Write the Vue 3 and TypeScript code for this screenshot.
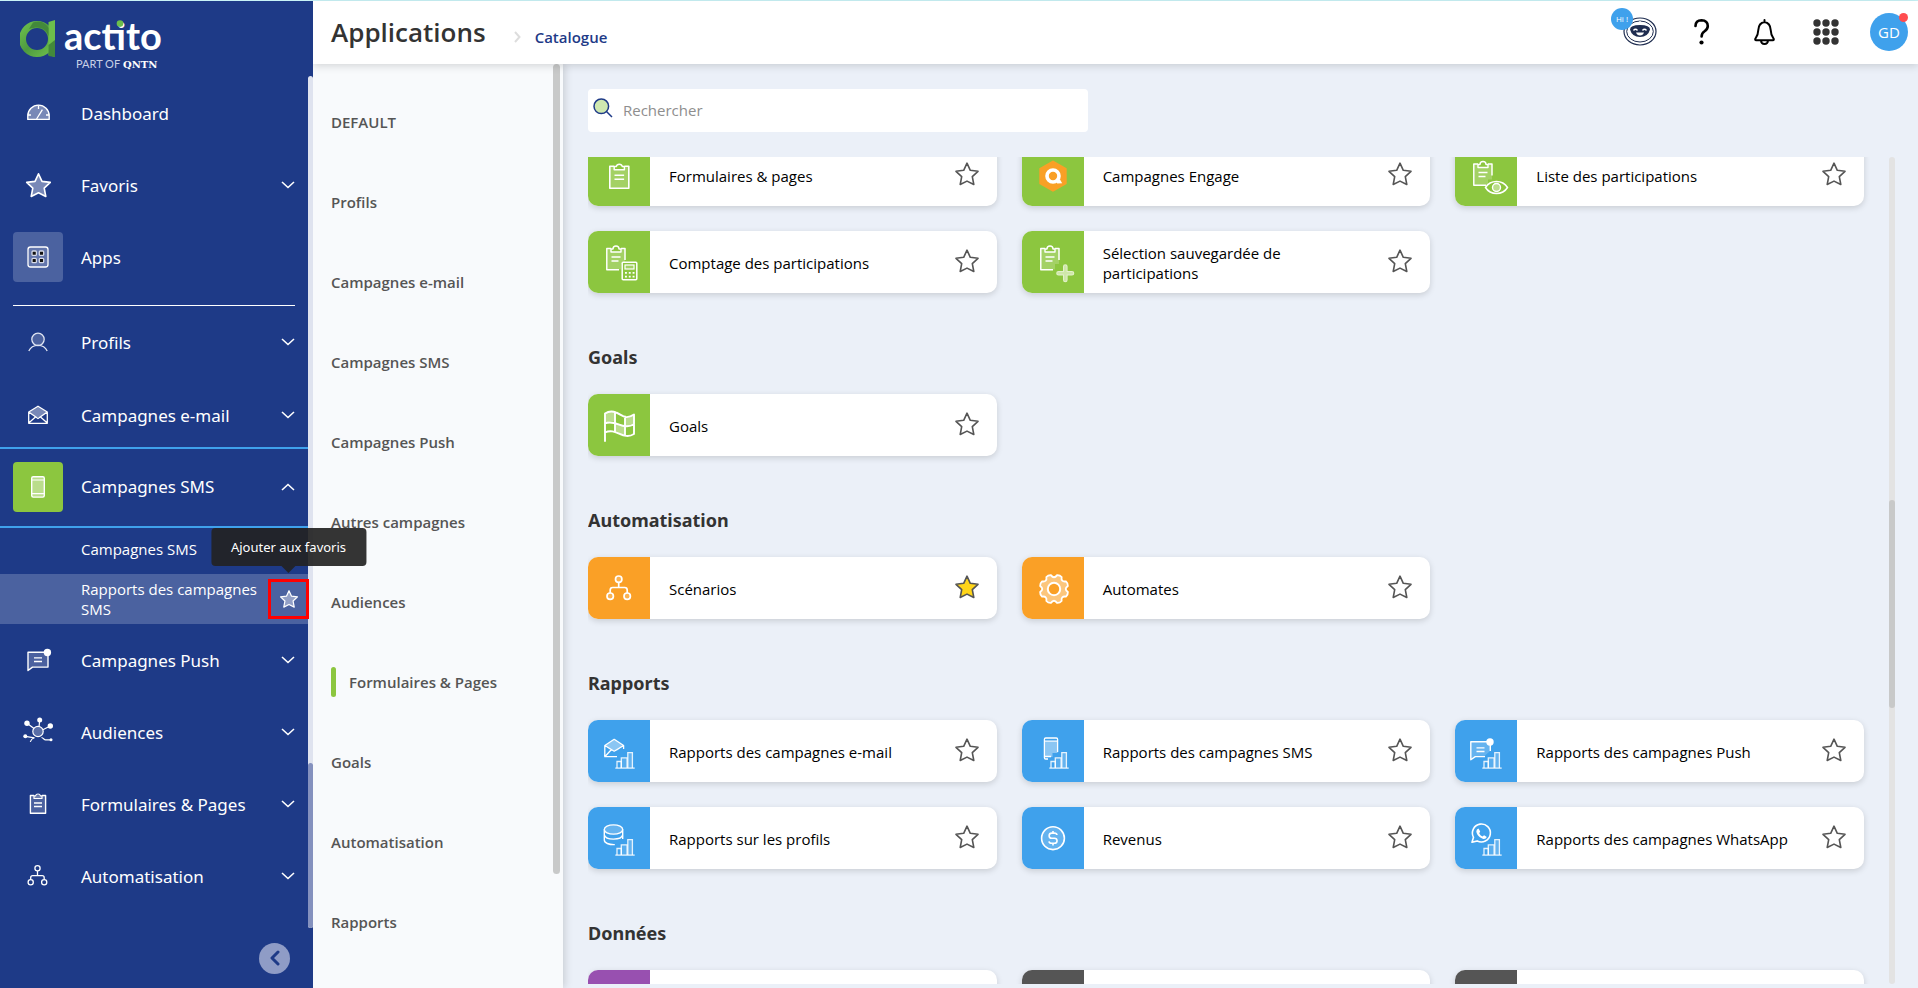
<script setup lang="ts">
import { ref } from 'vue'

interface MenuEntry {
  label: string
  icon: string
  toggle?: boolean
}

interface AppCard {
  name: string
  icon: string
  tone: string
  favourite?: boolean
}

interface AppGroup {
  title: string
  cards: AppCard[]
}

const query = ref('')

const topMenu: MenuEntry[] = [
  { label: 'Dashboard', icon: 'n-dashboard' },
  { label: 'Favoris', icon: 'n-star', toggle: true },
  { label: 'Apps', icon: 'n-apps' },
]

const upperMenu: MenuEntry[] = [
  { label: 'Profils', icon: 'n-profile', toggle: true },
  { label: 'Campagnes e-mail', icon: 'n-mail', toggle: true },
]

const lowerMenu: MenuEntry[] = [
  { label: 'Campagnes Push', icon: 'n-push', toggle: true },
  { label: 'Audiences', icon: 'n-audience', toggle: true },
  { label: 'Formulaires & Pages', icon: 'n-form', toggle: true },
  { label: 'Automatisation', icon: 'n-flow', toggle: true },
]

const categories: string[] = [
  'DEFAULT',
  'Profils',
  'Campagnes e-mail',
  'Campagnes SMS',
  'Campagnes Push',
  'Autres campagnes',
  'Audiences',
  'Formulaires & Pages',
  'Goals',
  'Automatisation',
  'Rapports',
]
const activeCategory = 'Formulaires & Pages'

const groups: AppGroup[] = [
  {
    title: '',
    cards: [
      { name: 'Formulaires & pages', icon: 'c-form', tone: 'green' },
      { name: 'Campagnes Engage', icon: 'c-engage', tone: 'green' },
      { name: 'Liste des participations', icon: 'c-list', tone: 'green' },
      { name: 'Comptage des participations', icon: 'c-count', tone: 'green' },
      { name: 'Sélection sauvegardée de participations', icon: 'c-select', tone: 'green' },
    ],
  },
  { title: 'Goals', cards: [{ name: 'Goals', icon: 'c-flag', tone: 'green' }] },
  {
    title: 'Automatisation',
    cards: [
      { name: 'Scénarios', icon: 'c-flow', tone: 'orange', favourite: true },
      { name: 'Automates', icon: 'c-gear', tone: 'orange' },
    ],
  },
  {
    title: 'Rapports',
    cards: [
      { name: 'Rapports des campagnes e-mail', icon: 'c-mail', tone: 'blue' },
      { name: 'Rapports des campagnes SMS', icon: 'c-sms', tone: 'blue' },
      { name: 'Rapports des campagnes Push', icon: 'c-push', tone: 'blue' },
      { name: 'Rapports sur les profils', icon: 'c-base', tone: 'blue' },
      { name: 'Revenus', icon: 'c-money', tone: 'blue' },
      { name: 'Rapports des campagnes WhatsApp', icon: 'c-whatsapp', tone: 'blue' },
    ],
  },
  {
    title: 'Données',
    cards: [
      { name: '', icon: '', tone: 'purple' },
      { name: '', icon: '', tone: 'grey' },
      { name: '', icon: '', tone: 'grey' },
    ],
  },
]

// Outline of an eight-toothed wheel with rounded notches.
function gearPath(cx: number, cy: number, outer: number, inner: number): string {
  const at = (deg: number, r: number): string => {
    const a = (deg * Math.PI) / 180
    return `${(cx + r * Math.cos(a)).toFixed(2)} ${(cy + r * Math.sin(a)).toFixed(2)}`
  }
  let d = `M${at(12, outer)}`
  for (let k = 0; k < 8; k++) {
    const c = 22.5 + 45 * k
    d += `Q${at(c, outer + 1)} ${at(c + 10, outer)}Q${at(c + 22.5, inner)} ${at(c + 35, outer)}`
  }
  return d + 'Z'
}
const gear = gearPath(32, 32, 14.2, 9.6)

const dots: number[][] = [0, 1, 2].flatMap((r) => [0, 1, 2].map((c) => [10 + c * 9, 10 + r * 9]))
</script>

<template>
  <svg class="defs" aria-hidden="true">
    <defs>
      <linearGradient id="ring" x1="0" y1="0" x2="1" y2="1">
        <stop offset="0" stop-color="#6cbe4b" />
        <stop offset="0.5" stop-color="#4d9a40" />
        <stop offset="1" stop-color="#6cbe4b" />
      </linearGradient>
    </defs>

    <symbol id="star" viewBox="0 0 26 26">
      <path d="M13 2.2l3.3 7.1 7.7 1-5.7 5.3 1.5 7.9L13 20.1l-6.8 3.4 1.5-7.9L2 10.3l7.7-1z" stroke-width="1.6" stroke-linejoin="round" />
    </symbol>

    <symbol id="n-dashboard" viewBox="0 0 50 50">
      <path d="M14.8 31.4v-3.6a10.7 10.7 0 0 1 21.4 0v3.6z" fill="#ffffff66" stroke="#fff" stroke-width="1.4" stroke-linejoin="round" />
      <path d="M23.6 31l5.8-9.4M25.5 17.5v3.4M15 27h3M33 27h3" stroke="#fff" stroke-width="1.3" />
    </symbol>
    <symbol id="n-star" viewBox="0 0 50 50">
      <path d="M25.5 13.8l3.5 7.6 8.3 1-6.1 5.7 1.6 8.4-7.3-3.7-7.3 3.7 1.6-8.4-6.1-5.7 8.3-1z" fill="#ffffff66" stroke="#fff" stroke-width="1.6" stroke-linejoin="round" />
    </symbol>
    <symbol id="n-apps" viewBox="0 0 50 50">
      <rect x="15" y="15" width="20" height="20" rx="2.5" fill="#ffffff22" stroke="#fff" stroke-width="1.3" />
      <g fill="#111" stroke="#d5d9e6" stroke-width="1.3">
        <rect x="19" y="19" width="4.4" height="4.4" rx="1" /><rect x="26.3" y="19" width="4.4" height="4.4" rx="1" />
        <rect x="19" y="26.3" width="4.4" height="4.4" rx="1" /><rect x="26.3" y="26.3" width="4.4" height="4.4" rx="1" />
      </g>
    </symbol>
    <symbol id="n-profile" viewBox="0 0 50 50">
      <circle cx="25" cy="22.3" r="6.2" fill="#ffffff33" stroke="#dfe4f2" stroke-width="1.3" />
      <path d="M15.8 34c1.6-3.6 5-5.7 9.2-5.7s7.600 2.100 9.200 5.700" fill="none" stroke="#dfe4f2" stroke-width="1.3" />
    </symbol>
    <symbol id="n-mail" viewBox="0 0 50 50">
      <path d="M16 22l9-5.800 9 5.800-6 5h-6z" fill="#ffffff66" />
      <path d="M15.700 22L25 16.200 34.300 22v11.300H15.700zM15.700 22l9.300 6.500 9.300-6.500M15.700 33l6.800-6M34.300 33l-6.800-6" fill="none" stroke="#fff" stroke-width="1.3" stroke-linejoin="round" />
    </symbol>
    <symbol id="n-phone" viewBox="0 0 50 50">
      <rect x="18.700" y="14.700" width="12.600" height="20.400" rx="1.5" fill="#ffffff66" stroke="#fff" stroke-width="1.4" />
      <path d="M19 18h12M19 31.700h12" stroke="#fff" stroke-width="1.2" />
    </symbol>
    <symbol id="n-push" viewBox="0 0 50 50">
      <path d="M15 17.300h20v14.800H19.500L15 35.500z" fill="#ffffff33" stroke="#fff" stroke-width="1.4" stroke-linejoin="round" />
      <path d="M21 22.800h8M21 26.500h8" stroke="#fff" stroke-width="1.3" />
      <circle cx="34.400" cy="17.500" r="3.700" fill="#fff" />
    </symbol>
    <symbol id="n-audience" viewBox="0 0 50 50">
      <circle cx="25" cy="24.500" r="5.200" fill="#ffffff44" stroke="#fff" stroke-width="1.2" />
      <path d="M14 16.300l7 5.200M26.700 13l-.6 6.300M37.300 19l-7.500 3.700M12.300 29.300l9.200 1.500c-2 .6-3.600 2-4.200 4M28.500 30.500c1.800.4 2.500 2.300 4 2.300H38" fill="none" stroke="#fff" stroke-width="1.200" />
      <g fill="#fff"><circle cx="14" cy="16.300" r="2.700" /><circle cx="26.700" cy="13" r="2.500" /><circle cx="37.300" cy="19" r="2.700" /><circle cx="12.300" cy="29.300" r="2" /><circle cx="38" cy="32.800" r="1.500" /></g>
    </symbol>
    <symbol id="n-form" viewBox="0 0 50 50">
      <path d="M21 16.500h-3.600v17.800h15.200V16.500H29" fill="#ffffff33" stroke="#fff" stroke-width="1.400" stroke-linejoin="round" />
      <path d="M21 19.500v-2.600h1.500a2.600 2.600 0 0 1 5 0H29v2.600z" fill="#ffffff33" stroke="#fff" stroke-width="1.200" stroke-linejoin="round" />
      <path d="M21 24h8M21 27.500h8" stroke="#fff" stroke-width="1.300" />
    </symbol>
    <symbol id="n-flow" viewBox="0 0 50 50">
      <g fill="none" stroke="#fff" stroke-width="1.300">
        <circle cx="24.500" cy="17.200" r="2.600" /><circle cx="17.700" cy="31.300" r="2.600" /><circle cx="31.200" cy="31.300" r="2.600" />
        <path d="M24.500 20v4.700M17.700 28.500v-1.800q0-2 2-2h9.500q2 0 2 2v1.800" />
      </g>
    </symbol>

    <symbol id="bars" viewBox="0 0 62 62">
      <g stroke="#ffffffd9" stroke-width="1.300">
        <path d="M29 48v-6.500h4.300V48" fill="none" /><path d="M33.300 48V37.800h5.800V48" fill="#ffffff22" /><path d="M39.800 48V32.700h4.600V48" fill="#ffffff33" />
        <path d="M27.300 48.100h19.400" />
      </g>
    </symbol>
    <symbol id="c-form" viewBox="0 0 62 62">
      <path d="M26 22.200h-4.200v22h19v-22h-4.300" fill="#ffffff33" stroke="#fff" stroke-width="1.600" stroke-linejoin="round" />
      <path d="M26.200 25.800v-3.200h2a3.200 3.200 0 0 1 6.200 0h2v3.200z" fill="#8cc63f" stroke="#fff" stroke-width="1.500" stroke-linejoin="round" />
      <path d="M26.500 31.200h9.600M26.500 35.200h9.600" stroke="#fff" stroke-width="1.500" />
    </symbol>
    <symbol id="clip-cut" viewBox="0 0 62 62">
      <path d="M23 17.500h-3.700v21H33V33h4V17.500h-4" fill="#ffffff33" />
      <path d="M23 17.500h-4.200v21.300H31M37 29V17.500h-4" fill="none" stroke="#fff" stroke-width="1.500" stroke-linejoin="round" />
      <path d="M23 21v-3h2a3 3 0 0 1 6 0h2v3z" fill="#8cc63f" stroke="#fff" stroke-width="1.400" stroke-linejoin="round" />
      <path d="M23.500 26h9M23.500 30h7" stroke="#fff" stroke-width="1.400" />
    </symbol>
    <symbol id="c-engage" viewBox="0 0 62 62">
      <path d="M31 17.500l12.700 7.300v14.600L31 46.700l-12.700-7.300V24.800z" fill="#f9a026" stroke="#f9a026" stroke-width="2" stroke-linejoin="round" />
      <circle cx="31" cy="32" r="6" fill="none" stroke="#fff" stroke-width="3.600" />
      <path d="M34 36.500l4-1 2.200 3.700-5 .2z" fill="#fff" />
    </symbol>
    <symbol id="c-list" viewBox="0 0 62 62">
      <g transform="translate(0 2.500)"><use href="#clip-cut" /></g>
      <path d="M30.500 43.500c5-8 17-8 22 0-5 8-17 8-22 0z" fill="#8cc63f" stroke="#fff" stroke-width="1.500" />
      <circle cx="41.500" cy="43.500" r="4" fill="#ffffff66" stroke="#fff" stroke-width="1.400" />
    </symbol>
    <symbol id="c-count" viewBox="0 0 62 62">
      <use href="#clip-cut" />
      <rect x="34.200" y="31.200" width="14.600" height="17.600" rx="1" fill="#8cc63f" stroke="#fff" stroke-width="1.500" />
      <rect x="37" y="34" width="9" height="4" fill="#ffffff33" stroke="#fff" stroke-width="1.200" />
      <path d="M37 41.900h9.500M37 45.600h9.500" stroke="#fff" stroke-width="1.700" stroke-dasharray="1.900" />
    </symbol>
    <symbol id="c-select" viewBox="0 0 62 62">
      <use href="#clip-cut" />
      <path d="M43.300 35.500v13.500M36.500 42.300H50" stroke="#e3f1cb" stroke-width="4.600" stroke-linecap="round" />
      <path d="M43.300 35.500v13.500M36.500 42.300H50" stroke="#cfe7a9" stroke-width="2.600" stroke-linecap="round" />
    </symbol>
    <symbol id="c-flag" viewBox="0 0 62 62">
      <path d="M17 19.500c3-2.500 6.500-2.800 10-1.500v10c-3.500-1-7-.5-10 1.500zM37 22.500c3 1 6 .2 9-1.800v9.500c-3 2-6 2.600-9 1.800zM27 28c3.500 1.200 6.500 3.300 10 4v9.600c-3.500-.6-6.500-3-10-4.100z" fill="#ffffff66" />
      <path d="M17 47V19.500c9-6 16 3 20.500 3.500 3 .4 6-.8 8.500-2.500V40c-11 7-18-7-29-1.500M17 29.500c10-5 18 7.500 29 .8M27 18v20M37 22.500v19" fill="none" stroke="#fff" stroke-width="1.900" stroke-linejoin="round" stroke-linecap="round" />
    </symbol>
    <symbol id="c-flow" viewBox="0 0 62 62">
      <g fill="#ffffff33" stroke="#fff" stroke-width="1.700">
        <circle cx="30.700" cy="22.200" r="3.200" /><circle cx="22.200" cy="39.200" r="3.200" /><circle cx="39.200" cy="39.200" r="3.200" />
        <path d="M30.700 25.500v4.800M22.200 36v-3q0-2.500 2.500-2.500h12q2.500 0 2.500 2.500v3" fill="none" />
      </g>
    </symbol>
    <symbol id="c-gear" viewBox="0 0 62 62">
      <path :d="gear" fill="#ffffff66" stroke="#fff" stroke-width="1.800" stroke-linejoin="round" />
      <circle cx="32" cy="32" r="6.200" fill="#faa026" stroke="#fff" stroke-width="2" />
    </symbol>
    <symbol id="c-mail" viewBox="0 0 62 62">
      <path d="M17 25.500l9.200-6.300 9.200 6.300-6 5h-6.400z" fill="#ffffff66" />
      <path d="M29 36.700H16.800V25.500l9.400-6.200 9.400 6.200v3.500M16.800 25.500l9.400 5.700 9.400-5.700M17 36.500l6.500-7" fill="none" stroke="#fff" stroke-width="1.300" stroke-linejoin="round" />
      <use href="#bars" />
    </symbol>
    <symbol id="c-sms" viewBox="0 0 62 62">
      <path d="M22.500 21.500h13V33h-5v4h-8z" fill="#ffffff66" />
      <path d="M26 39h-2.300q-1.300 0-1.300-1.300V19.300q0-1.300 1.300-1.300h10.600q1.300 0 1.300 1.300V32M22.400 21.200h13.200M22.400 36.500H29" fill="none" stroke="#fff" stroke-width="1.300" />
      <use href="#bars" />
    </symbol>
    <symbol id="c-push" viewBox="0 0 62 62">
      <path d="M16 22h19v9l-6 5.500h-9L16 39.500z" fill="#ffffff33" />
      <path d="M33 21.800H15.800v18l4.500-3.200H30M35.300 24v7" fill="none" stroke="#fff" stroke-width="1.400" stroke-linejoin="round" />
      <path d="M21.500 27.800h8M21.500 31.500h8" stroke="#fff" stroke-width="1.300" />
      <circle cx="35" cy="22" r="3.700" fill="#fff" />
      <use href="#bars" />
    </symbol>
    <symbol id="c-base" viewBox="0 0 62 62">
      <g fill="none" stroke="#fff" stroke-width="1.400">
        <ellipse cx="25.500" cy="22.500" rx="9.200" ry="4.600" fill="#ffffff33" />
        <path d="M16.300 22.500V33c0 3 4.500 4.800 10.500 4.600M34.700 22.500V32M16.300 28c1.500 5.500 17 5.500 18.400 0" />
      </g>
      <use href="#bars" />
    </symbol>
    <symbol id="c-money" viewBox="0 0 62 62">
      <circle cx="31" cy="31.200" r="11.400" fill="#ffffff33" stroke="#fff" stroke-width="1.600" />
      <path d="M35 28q-.3-1.900-2.500-1.900h-2.800a2.500 2.500 0 0 0 0 5.100h2.800a2.500 2.500 0 0 1 0 5.100h-2.800Q27.300 36.300 27 34.300M31 24v2M31 36.300v2.300" fill="none" stroke="#fff" stroke-width="1.600" />
    </symbol>
    <symbol id="c-whatsapp" viewBox="0 0 62 62">
      <path d="M17 35.300l1.500-5a9 9 0 1 1 3.600 3.600z" fill="none" stroke="#fff" stroke-width="1.600" stroke-linejoin="round" />
      <path d="M23.500 21.600l1.700 3-1 1.600q1 2.300 3.200 3.200l1.700-1.200 2.700 1.700q-.9 2.200-3.200 2c-4-.8-7-4-7.300-7.600q.2-2 2.200-2.700z" fill="#fff" />
      <use href="#bars" />
    </symbol>
  </svg>

  <div class="shell">
    <aside class="side">
      <a class="brand" href="#">
        <svg width="150" height="66" viewBox="0 -8 150 66" role="img" aria-label="actito">
          <circle cx="17" cy="24" r="14.500" fill="none" stroke="url(#ring)" stroke-width="7" />
          <path d="M28.500 7L35 5v37l-6.500-2z" fill="#6cbe4b" />
          <path d="M13 7.500C20 4.500 26 8 28.500 13v8C26 13 19 10.500 9 14z" fill="#43893b" />
          <path d="M28.500 30L35 25v17l-6.500-1z" fill="#43893b" />
          <text class="word" x="44" y="35">actito</text>
          <circle class="tittle" cx="100" cy="8.600" r="3.300" />
          <text class="part" x="56" y="53">PART OF</text>
          <text class="owner" x="103" y="53">QNTN</text>
        </svg>
      </a>

      <div class="side-body">
        <nav class="menus" aria-label="Menu principal">
          <ul class="menu compact">
            <li v-for="item in topMenu" :key="item.label">
              <button class="entry" type="button" :class="{ current: item.label === 'Apps' }">
                <svg class="entry-icon"><use :href="'#' + item.icon" /></svg>
                <span class="entry-label">{{ item.label }}</span>
                <svg v-if="item.toggle" class="chevron" viewBox="0 0 14 8"><path d="M1 1l6 5.500L13 1" /></svg>
              </button>
            </li>
          </ul>
          <hr class="rule" />
          <ul class="menu">
            <li v-for="item in upperMenu" :key="item.label">
              <button class="entry" type="button">
                <svg class="entry-icon"><use :href="'#' + item.icon" /></svg>
                <span class="entry-label">{{ item.label }}</span>
                <svg class="chevron" viewBox="0 0 14 8"><path d="M1 1l6 5.500L13 1" /></svg>
              </button>
            </li>
          </ul>
          <div class="open-group">
            <button class="entry opened" type="button" aria-expanded="true">
              <svg class="entry-icon"><use href="#n-phone" /></svg>
              <span class="entry-label">Campagnes SMS</span>
              <svg class="chevron" viewBox="0 0 14 8"><path d="M1 7l6-5.500L13 7" /></svg>
            </button>
            <ul class="sub">
              <li class="sub-item"><a href="#">Campagnes SMS</a></li>
              <li class="sub-item hovered">
                <a href="#">Rapports des campagnes SMS</a>
                <button class="pin" type="button" aria-describedby="pin-tip">
                  <svg class="pin-star"><use href="#star" /></svg>
                  <span id="pin-tip" class="tip" role="tooltip">Ajouter aux favoris</span>
                </button>
              </li>
            </ul>
          </div>
          <ul class="menu compact after">
            <li v-for="item in lowerMenu" :key="item.label">
              <button class="entry" type="button">
                <svg class="entry-icon"><use :href="'#' + item.icon" /></svg>
                <span class="entry-label">{{ item.label }}</span>
                <svg class="chevron" viewBox="0 0 14 8"><path d="M1 1l6 5.500L13 1" /></svg>
              </button>
            </li>
          </ul>
        </nav>
        <div class="side-track"><div class="side-thumb"></div></div>
      </div>

      <div class="side-foot">
        <button class="collapse" type="button" aria-label="Réduire le menu">
          <svg width="10" height="16" viewBox="0 0 10 16"><path d="M8 2L2 8l6 6" /></svg>
        </button>
      </div>
    </aside>

    <div class="page">
      <header class="bar">
        <h1>Applications</h1>
        <svg class="crumb" width="8" height="12" viewBox="0 0 8 12"><path d="M2 1l4.500 5L2 11" /></svg>
        <a class="here" href="#">Catalogue</a>
        <div class="tools">
          <button class="tool" type="button" aria-label="Assistant">
            <svg width="38" height="38" viewBox="0 0 38 38">
              <g fill="none" stroke="#1f2d50">
                <ellipse cx="18" cy="18.500" rx="16" ry="13.500" stroke-width="1.200" />
                <ellipse cx="18" cy="18.500" rx="13.300" ry="10.500" stroke-width="1" />
              </g>
              <path d="M8 16.500q0-4.500 10-4.500t10 4.500q-2 7.500-10 7.500T8 16.500z" fill="#1f2d50" />
              <path d="M11.500 17.500q2-2.500 4 0M20.500 17.500q2-2.500 4 0" fill="none" stroke="#fff" stroke-width="1.300" />
              <path d="M14 19.500h8q-1 3-4 3t-4-3z" fill="#fff" />
              <path d="M18 8v3" stroke="#fff" stroke-width="1.200" />
            </svg>
            <span class="hi">Hi !</span>
          </button>
          <button class="tool" type="button" aria-label="Aide">
            <svg width="38" height="38" viewBox="0 0 38 38">
              <path d="M11.500 13q.2-5.700 6-5.700 6.200.2 6.300 5.800 0 3-3.200 5.200-3 2-3 5.200" fill="none" stroke="#000" stroke-width="2.600" stroke-linecap="round" />
              <circle cx="17.500" cy="29.500" r="2.100" />
            </svg>
          </button>
          <button class="tool" type="button" aria-label="Notifications">
            <svg width="38" height="38" viewBox="0 0 38 38">
              <path d="M18.500 7v2c-4.500.8-6 4-6.200 8-.2 4-.8 6-2.600 8.200-1 1.300-.6 2 .6 2h16.400c1.200 0 1.600-.7.600-2-1.800-2.200-2.400-4.200-2.600-8.200-.2-4-1.700-7.200-6.200-8M15 27.500q.2 3.500 3.500 3.500t3.500-3.500" fill="none" stroke="#000" stroke-width="2" stroke-linecap="round" stroke-linejoin="round" />
            </svg>
          </button>
          <button class="tool" type="button" aria-label="Applications">
            <svg width="38" height="38" viewBox="0 0 38 38" fill="#333">
              <circle v-for="(d, i) in dots" :key="i" :cx="d[0] - 1" :cy="d[1]" r="3.700" />
            </svg>
          </button>
          <button class="avatar" type="button">GD<span class="alert"></span></button>
        </div>
      </header>

      <div class="content">
        <nav class="cats" aria-label="Catégories">
          <ul>
            <li v-for="c in categories" :key="c">
              <a href="#" :class="{ active: c === activeCategory }">{{ c }}</a>
            </li>
          </ul>
          <div class="cats-thumb"></div>
        </nav>

        <main class="main">
          <div class="search">
            <label for="search" aria-label="Rechercher">
              <svg width="20" height="20" viewBox="0 0 20 20">
                <circle cx="8.300" cy="8.300" r="7.300" fill="#cfe8b0" stroke="#1e3a87" stroke-width="1.500" />
                <path d="M13.500 13.500l5.500 5.500" stroke="#1e3a87" stroke-width="1.500" />
              </svg>
            </label>
            <input id="search" v-model="query" type="text" placeholder="Rechercher" />
          </div>

          <div class="results">
            <div class="groups">
              <section v-for="(g, gi) in groups" :key="gi" class="group">
                <h2 v-if="g.title">{{ g.title }}</h2>
                <ul class="cards">
                  <li v-for="(card, ci) in g.cards" :key="ci" class="card">
                    <div class="badge" :class="card.tone">
                      <svg v-if="card.icon"><use :href="'#' + card.icon" /></svg>
                    </div>
                    <a v-if="card.name" class="card-name" href="#">{{ card.name }}</a>
                    <button v-if="card.name" class="fav" :class="{ on: card.favourite }" type="button" aria-label="Favori">
                      <svg><use href="#star" /></svg>
                    </button>
                  </li>
                </ul>
              </section>
            </div>
            <div class="track"><div class="thumb"></div></div>
          </div>
        </main>
      </div>
    </div>
  </div>
</template>

<style>
body {
  margin: 0;
  overflow: hidden;
}
</style>

<style scoped>
.defs {
  position: absolute;
  width: 0;
  height: 0;
}
.shell {
  display: flex;
  height: 100vh;
  box-sizing: border-box;
  border-top: 1px solid #c9f3f7;
  background: #ebf0f8;
  font-family: 'Open Sans', 'Noto Sans', sans-serif;
  color: #000;
}
ul {
  list-style: none;
  margin: 0;
  padding: 0;
}
button {
  font: inherit;
  color: inherit;
  background: none;
  border: 0;
  padding: 0;
  cursor: pointer;
}
a {
  color: inherit;
  text-decoration: none;
}

/* Side menu */
.side {
  position: relative;
  z-index: 3;
  flex: 0 0 313px;
  display: flex;
  flex-direction: column;
  background: #1e3a87;
  color: #fff;
}
.brand {
  flex: 0 0 75px;
  padding: 6px 0 0 20px;
  box-sizing: border-box;
}
.brand svg {
  display: block;
}
.word {
  font: 700 38px Lato, sans-serif;
  fill: #fff;
}
.tittle {
  fill: #6cbe4b;
}
.part {
  font: 400 11px Lato, sans-serif;
  fill: #c8d0e6;
}
.owner {
  font: 700 10px 'DejaVu Serif', serif;
  fill: #fff;
}
.side-body {
  flex: 1;
  min-height: 0;
  display: flex;
}
.menus {
  flex: 1;
  min-width: 0;
}
.side-track {
  flex: 0 0 5px;
  display: flex;
  flex-direction: column;
  justify-content: flex-end;
  border-radius: 3px;
  background: #dfe3ef;
}
.side-thumb {
  height: 165px;
  border-radius: 3px;
  background: #8491be;
}
.menu {
  display: grid;
  gap: 13px;
  padding: 6px 0 2px;
}
.menu.compact {
  gap: 12px;
  padding: 7px 0 18px;
}
.menu.after {
  padding: 6px 0 0;
}
.entry {
  display: flex;
  align-items: center;
  width: 100%;
  height: 60px;
  padding: 0 13px;
  font-family: 'Noto Sans', 'Open Sans', sans-serif;
  font-size: 17px;
  text-align: left;
}
.entry-icon {
  flex: none;
  width: 50px;
  height: 50px;
  border-radius: 4px;
}
.current .entry-icon {
  background: #4b62a0;
}
.opened .entry-icon {
  background: #8cc63f;
}
.entry-label {
  flex: 1;
  padding-left: 18px;
}
.chevron {
  flex: none;
  width: 14px;
  height: 8px;
  fill: none;
  stroke: #fff;
  stroke-width: 1.6;
}
.rule {
  margin: 0 13px;
  border: 0;
  border-top: 1px solid #fff;
}
.opened {
  height: 81px;
  padding-bottom: 2px;
  border-top: 2px solid #3fa1ec;
  border-bottom: 2px solid #3fa1ec;
}
.sub-item {
  display: flex;
  align-items: center;
  box-sizing: border-box;
  min-height: 46px;
  padding: 0 0 4px 81px;
  font-size: 15px;
  line-height: 20px;
}
.sub-item a {
  flex: 1;
}
.sub-item.hovered {
  min-height: 50px;
  padding-bottom: 0;
  background: #4b62a0;
}
.pin {
  position: relative;
  display: grid;
  place-items: center;
  flex: none;
  width: 41px;
  height: 40px;
  margin-right: -1px;
  border: 3px solid #f00;
  box-sizing: border-box;
}
.pin-star {
  width: 20px;
  height: 20px;
  fill: #ffffff66;
  stroke: #fff;
}
.tip {
  position: absolute;
  left: 50%;
  bottom: 50px;
  transform: translateX(-50%);
  padding: 9px 20px;
  border-radius: 4px;
  background: #232323eb;
  font-family: 'Noto Sans', 'Open Sans', sans-serif;
  font-size: 13px;
  line-height: 20px;
  white-space: nowrap;
}
.tip::after {
  content: '';
  position: absolute;
  top: 100%;
  left: 50%;
  margin-left: -7px;
  border: 7px solid transparent;
  border-top-color: #232323eb;
  border-bottom: 0;
}
.side-foot {
  flex: 0 0 60px;
  display: flex;
  justify-content: flex-end;
  align-items: center;
  padding-right: 23px;
}
.collapse {
  display: grid;
  place-items: center;
  width: 31px;
  height: 31px;
  border-radius: 50%;
  background: #8f9cc6;
}
.collapse path {
  fill: none;
  stroke: #1e3a87;
  stroke-width: 3;
  stroke-linecap: round;
  stroke-linejoin: round;
}

/* Top bar */
.page {
  flex: 1;
  min-width: 0;
  display: flex;
  flex-direction: column;
}
.bar {
  position: relative;
  z-index: 2;
  flex: 0 0 63px;
  display: flex;
  align-items: center;
  box-sizing: border-box;
  padding: 0 10px 2px 18px;
  background: #fff;
  box-shadow: 0 2px 8px #00000026;
}
h1 {
  margin: 0;
  font-size: 26px;
  font-weight: 600;
  color: #333;
}
.crumb {
  margin: 10px 14px 0 27px;
  fill: none;
  stroke: #ddd;
  stroke-width: 2;
}
.here {
  margin-top: 10px;
  font-size: 15px;
  font-weight: 600;
  color: #1e3a87;
}
.tools {
  display: flex;
  gap: 24px;
  margin-left: auto;
}
.tool {
  position: relative;
  width: 38px;
  height: 38px;
}
.tool svg {
  display: block;
}
.hi {
  position: absolute;
  left: -11px;
  top: -5px;
  width: 22px;
  height: 22px;
  border-radius: 50%;
  background: #3fa1ec;
  color: #fff;
  font-size: 8px;
  line-height: 22px;
  text-align: center;
}
.avatar {
  position: relative;
  width: 38px;
  height: 38px;
  border-radius: 50%;
  background: #3fa1ec;
  color: #fff;
  font-size: 15px;
}
.alert {
  position: absolute;
  top: 0;
  right: 0;
  width: 9px;
  height: 9px;
  border-radius: 50%;
  background: #ff4d4f;
}

/* Categories */
.content {
  flex: 1;
  min-height: 0;
  display: flex;
}
.cats {
  position: relative;
  z-index: 1;
  flex: 0 0 250px;
  display: flex;
  background: #f8fafc;
  box-shadow: 2px 0 8px #00000026;
}
.cats ul {
  flex: 1;
  padding: 18px 0 0 18px;
}
.cats li {
  display: flex;
  align-items: center;
  height: 80px;
}
.cats a {
  font-size: 15px;
  font-weight: 600;
  line-height: 30px;
  color: #555;
}
.cats a.active {
  display: flex;
}
.cats a.active::before {
  content: '';
  width: 5px;
  margin-right: 13px;
  border-radius: 3px;
  background: #8cc63f;
}
.cats-thumb {
  width: 7px;
  height: 810px;
  margin-right: 3px;
  border-radius: 4px;
  background: #c8c9c9;
}

/* Catalogue */
.main {
  flex: 1;
  min-width: 0;
  display: flex;
  flex-direction: column;
  padding: 25px 23px 4px 25px;
}
.search {
  display: flex;
  width: 500px;
  height: 43px;
  border-radius: 4px;
  background: #fff;
}
.search label {
  padding: 9px 10px 0 5px;
}
.search input {
  flex: 1;
  min-width: 0;
  border: 0;
  padding: 0 0 2px;
  outline: 0;
  background: none;
  font: 15px 'Open Sans', sans-serif;
}
.search input::placeholder {
  color: #8e8e8e;
}
.results {
  flex: 1;
  min-height: 0;
  display: flex;
  gap: 25px;
  margin-top: 25px;
  overflow: hidden;
}
.groups {
  flex: 1;
  min-width: 0;
  margin-top: -13px;
}
.group h2 {
  margin: 0;
  padding: 51px 0 23px;
  font-family: 'Noto Sans', 'Open Sans', sans-serif;
  font-size: 18px;
  font-weight: 700;
  line-height: 27px;
  color: #333;
}
.cards {
  display: grid;
  grid-template-columns: repeat(3, minmax(0, 1fr));
  gap: 25px;
}
.card {
  display: flex;
  align-items: center;
  height: 62px;
  border-radius: 10px;
  background: #fff;
  box-shadow: 0 2px 6px #00000026;
}
.badge {
  flex: none;
  width: 62px;
  height: 62px;
  border-radius: 10px 0 0 10px;
}
.badge svg {
  display: block;
  width: 62px;
  height: 62px;
}
.green {
  background: #8cc63f;
}
.orange {
  background: #faa026;
}
.blue {
  background: #3fa1ec;
}
.purple {
  background: #9850b0;
}
.grey {
  background: #555;
}
.card-name {
  flex: 1;
  padding: 2px 20px 0 19px;
  font-size: 15px;
  line-height: 20px;
}
.fav {
  flex: none;
  width: 26px;
  height: 26px;
  margin: 0 17px 2px 0;
}
.fav svg {
  display: block;
  width: 26px;
  height: 26px;
  fill: none;
  stroke: #555;
}
.fav.on svg {
  fill: #ffd51a;
}
.track {
  flex: 0 0 6px;
  padding-top: 343px;
  border-radius: 3px;
  background: #e3e3e3;
}
.thumb {
  height: 208px;
  border-radius: 3px;
  background: #c8c9c9;
}
</style>
